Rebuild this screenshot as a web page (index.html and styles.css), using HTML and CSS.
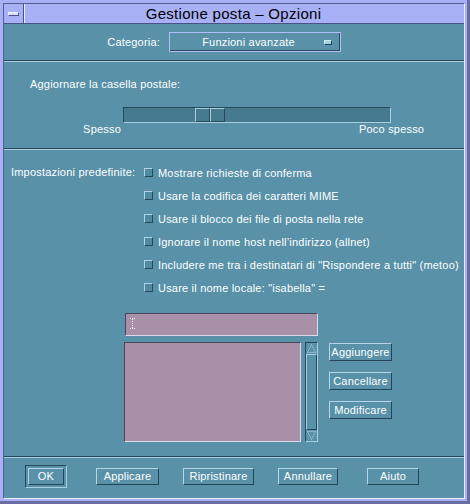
FILE: index.html
```html
<!DOCTYPE html>
<html lang="it">
<head>
    <meta charset="UTF-8">
    <title>Gestione posta – Opzioni</title>
    <link rel="stylesheet" href="styles.css">
</head>
<body>
    <div class="frame">
        <div class="window">
            <div class="titlebar">
                <div class="menu-btn"><span class="menu-bar"></span></div>
                <div class="title">Gestione posta – Opzioni</div>
            </div>

            <div class="content">
                <!-- categoria -->
                <div class="category">
                    <span class="cat-label">Categoria:</span>
                    <div class="dropdown">
                        <span class="dd-text">Funzioni avanzate</span>
                        <span class="dd-mark"></span>
                    </div>
                </div>
                <div class="sep"></div>

                <!-- aggiornamento casella -->
                <div class="refresh">
                    <div class="refresh-label">Aggiornare la casella postale:</div>
                    <div class="trough">
                        <div class="thumb"><span></span><span></span></div>
                    </div>
                    <div class="scale-labels">
                        <span class="spesso">Spesso</span>
                        <span class="poco">Poco spesso</span>
                    </div>
                </div>
                <div class="sep"></div>

                <!-- impostazioni predefinite -->
                <div class="defaults">
                    <div class="defaults-label">Impostazioni predefinite:</div>
                    <div class="checklist">
                        <label class="check"><span class="box"></span>Mostrare richieste di conferma</label>
                        <label class="check"><span class="box"></span>Usare la codifica dei caratteri MIME</label>
                        <label class="check"><span class="box"></span>Usare il blocco dei file di posta nella rete</label>
                        <label class="check"><span class="box"></span>Ignorare il nome host nell’indirizzo (allnet)</label>
                        <label class="check"><span class="box"></span>Includere me tra i destinatari di "Rispondere a tutti" (metoo)</label>
                        <label class="check"><span class="box"></span>Usare il nome locale: "isabella" =</label>
                    </div>

                    <div class="editor">
                        <div class="textfield">
                            <svg class="ibeam" width="5" height="11" viewBox="0 0 5 11">
                                <path d="M0 0.5h5M2.5 1v9M0 10.5h5" stroke="#f2f2f2" stroke-width="1" stroke-dasharray="1 1" fill="none"/>
                            </svg>
                        </div>
                        <div class="listbox"></div>
                        <div class="scrollbar">
                            <div class="arrow">
                                <svg width="11" height="11" viewBox="0 0 11 11">
                                    <path d="M5.5 1.5L1.5 9.5H9.5Z" stroke="#b8dcea" stroke-width="1" stroke-dasharray="1 1" fill="none"/>
                                </svg>
                            </div>
                            <div class="elevator"></div>
                            <div class="arrow">
                                <svg width="11" height="11" viewBox="0 0 11 11">
                                    <path d="M5.5 9.5L1.5 1.5H9.5Z" stroke="#b8dcea" stroke-width="1" stroke-dasharray="1 1" fill="none"/>
                                </svg>
                            </div>
                        </div>
                        <div class="side-buttons">
                            <div class="btn">Aggiungere</div>
                            <div class="btn">Cancellare</div>
                            <div class="btn">Modificare</div>
                        </div>
                    </div>
                </div>
                <div class="sep"></div>

                <!-- pulsanti -->
                <div class="actions">
                    <div class="default-ring"><div class="btn btn-ok">OK</div></div>
                    <div class="btn btn-apply">Applicare</div>
                    <div class="btn btn-reset">Ripristinare</div>
                    <div class="btn btn-cancel">Annullare</div>
                    <div class="btn btn-help">Aiuto</div>
                </div>
            </div>
        </div>
    </div>
</body>
</html>
```

FILE: styles.css
```css
body {
    margin: 0;
    background: #676da3;
    font-family: "Liberation Sans", Arial, sans-serif;
}

.frame {
    width: 467px;
    height: 501px;
    box-sizing: border-box;
    padding: 3px 2px 2px 3px;
    background: #a9b1f6;
}

.window {
    height: 100%;
    box-sizing: border-box;
    border: 1px solid;
    border-color: #565c96 #eef0ff #eef0ff #565c96;
    display: flex;
    flex-direction: column;
    background: #5891a8;
}

/* title bar */
.titlebar {
    height: 19px;
    border-bottom: 1px solid #4a5088;
    display: flex;
    background: #a9b1f6;
}

.menu-btn {
    width: 19px;
    border-right: 1px solid #4a5088;
    box-shadow: 1px 0 0 #eef0ff;
    display: flex;
    align-items: center;
    justify-content: center;
}

.menu-bar {
    width: 9px;
    height: 2px;
    background: #d8ddff;
    border: 1px solid;
    border-color: #f2f4ff #4a5088 #4a5088 #f2f4ff;
}

.title {
    flex: 1;
    padding-right: 21px;
    text-align: center;
    font-size: 15px;
    letter-spacing: 0.3px;
    line-height: 19px;
    color: #000;
}

/* main area */
.content {
    flex: 1;
    display: flex;
    flex-direction: column;
    color: #fff;
    font-size: 11px;
    letter-spacing: 0.2px;
}

.sep {
    border-top: 1px solid #27495a;
    border-bottom: 1px solid #a8cfe0;
}

.category {
    height: 36px;
    box-sizing: border-box;
    padding: 8px 0 0 96px;
    display: flex;
    align-items: flex-start;
}

.cat-label {
    width: 60px;
    text-align: right;
    line-height: 20px;
    margin-right: 9px;
}

.dropdown {
    width: 172px;
    height: 20px;
    box-sizing: border-box;
    border: 1px solid #b4bcfa;
    box-shadow: inset -1px -1px 0 #2a4a5c;
    display: flex;
    align-items: center;
}

.dd-text {
    flex: 1;
    text-align: center;
    padding-left: 3px;
}

.dd-mark {
    width: 8px;
    height: 5px;
    box-sizing: border-box;
    margin-right: 8px;
    background: #a8d0e0;
    border: 1px solid;
    border-color: #d0eaf4 #23455a #23455a #d0eaf4;
}

/* refresh slider */
.refresh {
    height: 86px;
    box-sizing: border-box;
    padding-top: 15px;
}

.refresh-label {
    padding-left: 26px;
    line-height: 14px;
}

.trough {
    margin: 16px 0 0 119px;
    width: 268px;
    height: 16px;
    box-sizing: border-box;
    border: 1px solid;
    border-color: #27495a #a8cfe0 #a8cfe0 #27495a;
    background: #467b8f;
    display: flex;
}

.thumb {
    margin-left: 71px;
    display: flex;
}

.thumb span {
    width: 15px;
    height: 14px;
    box-sizing: border-box;
    border: 1px solid;
    border-color: #a8cfe0 #27495a #27495a #a8cfe0;
}

.scale-labels {
    display: flex;
    line-height: 12px;
}

.spesso {
    width: 117px;
    text-align: right;
}

.poco {
    margin-left: 238px;
}

/* defaults */
.defaults {
    height: 306px;
    box-sizing: border-box;
    padding-top: 11px;
    display: grid;
    grid-template-columns: 140px 1fr;
    align-content: start;
}

.defaults-label {
    padding-left: 7px;
    line-height: 23px;
}

.check {
    height: 23px;
    display: flex;
    align-items: center;
}

.box {
    width: 9px;
    height: 9px;
    box-sizing: border-box;
    margin-right: 5px;
    border: 1px solid;
    border-color: #b0d4e4 #27495a #27495a #b0d4e4;
    background: #4f8aa0;
}

.editor {
    grid-column: 1 / -1;
    margin: 14px 0 0 120px;
    display: grid;
    grid-template-columns: 177px 4px 13px 11px 63px;
    grid-template-rows: 23px 6px 100px;
}

.textfield {
    grid-column: 1 / 4;
    grid-row: 1;
    margin-left: 1px;
    box-sizing: border-box;
    border: 1px solid;
    border-color: #4c4458 #e0d8e8 #e0d8e8 #4c4458;
    background: #a891a8;
    padding: 4px 0 0 4px;
}

.ibeam {
    display: block;
}

.listbox {
    grid-column: 1;
    grid-row: 3;
    box-sizing: border-box;
    border: 1px solid;
    border-color: #4c4458 #e0d8e8 #e0d8e8 #4c4458;
    background: #a891a8;
}

.scrollbar {
    grid-column: 3;
    grid-row: 3;
    box-sizing: border-box;
    border: 1px solid;
    border-color: #27495a #a8cfe0 #a8cfe0 #27495a;
    display: flex;
    flex-direction: column;
}

.arrow {
    height: 11px;
}

.arrow svg {
    display: block;
}

.elevator {
    flex: 1;
    border: 1px solid;
    border-color: #a8cfe0 #27495a #27495a #a8cfe0;
}

.side-buttons {
    grid-column: 5;
    grid-row: 3;
    padding-top: 1px;
    display: flex;
    flex-direction: column;
    gap: 11px;
}

.btn {
    height: 18px;
    box-sizing: border-box;
    border: 1px solid;
    border-color: #b4d6e6 #23455a #23455a #b4d6e6;
    text-align: center;
    line-height: 16px;
    color: #fff;
}

/* bottom buttons */
.actions {
    height: 40px;
    box-sizing: border-box;
    padding: 7px 0 0 21px;
    display: flex;
    align-items: flex-start;
}

.actions .btn {
    height: 17px;
    line-height: 15px;
    margin-top: 3px;
}

.default-ring {
    padding: 2px;
    border: 1px solid;
    border-color: #27495a #a8cfe0 #a8cfe0 #27495a;
}

.actions .btn-ok {
    width: 36px;
    margin-top: 0;
}

.btn-apply {
    width: 63px;
    margin-left: 29px;
}

.btn-reset {
    width: 71px;
    margin-left: 24px;
}

.btn-cancel {
    width: 60px;
    margin-left: 24px;
}

.btn-help {
    width: 52px;
    margin-left: 29px;
}
```
